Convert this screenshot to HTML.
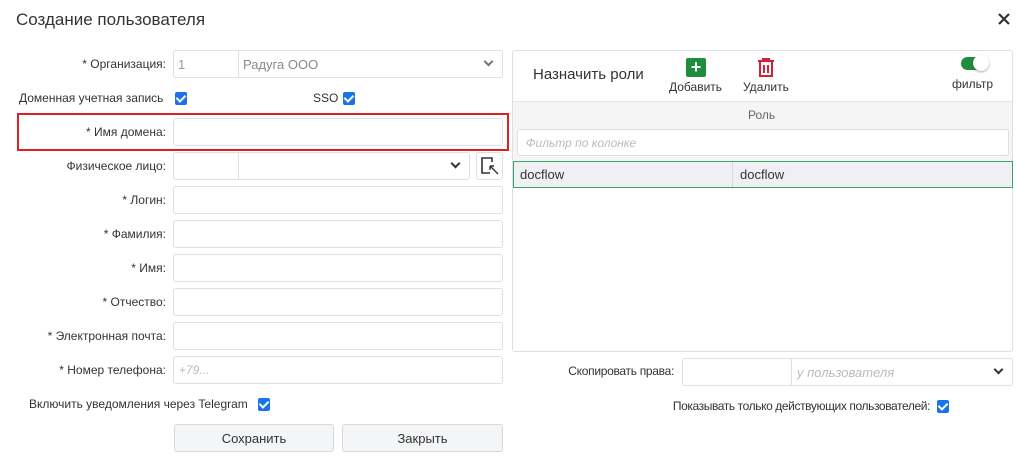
<!DOCTYPE html>
<html><head><meta charset="utf-8"><style>
*{box-sizing:border-box;margin:0;padding:0}
body{width:1017px;height:457px;background:#fff;font-family:"Liberation Sans",sans-serif;font-size:12px;color:#333;position:relative;overflow:hidden}
.a{position:absolute}
.lbl{position:absolute;right:851px;text-align:right;white-space:nowrap;color:#333}
.in{position:absolute;border:1px solid #dcdfe6;border-radius:3px;background:#fff;height:28px}
.cb{position:absolute;width:12px;height:13px;background:#1a73e8;border-radius:2px}
.cb::after{content:"";position:absolute;left:3px;top:1px;width:4px;height:7px;border:solid #fff;border-width:0 2px 2px 0;transform:rotate(45deg)}
.chev{position:absolute;width:7px;height:7px;border:solid #333;border-width:0 2px 2px 0;transform:rotate(45deg)}
.btn{position:absolute;border:1px solid #d5d8de;border-radius:3px;background:#f4f5f7;height:28px;text-align:center;line-height:27px;font-size:13px}
</style></head><body>
<div class="a" style="left:16px;top:10px;font-size:17px;color:#333">Создание пользователя</div>
<svg class="a" style="left:998px;top:13px" width="12" height="12" viewBox="0 0 12 12"><path d="M1 1l10 10M11 1L1 11" stroke="#333" stroke-width="2.2"/></svg>

<div class="lbl" style="top:57px">* Организация:</div>
<div class="in" style="left:173px;top:50px;width:330px"></div>
<div class="a" style="left:238px;top:51px;width:1px;height:26px;background:#dcdfe6"></div>
<div class="a" style="left:178px;top:57px;color:#999;font-size:13px">1</div>
<div class="a" style="left:243px;top:57px;color:#888;font-size:13px">Радуга ООО</div>
<div class="chev" style="left:485px;top:58px;border-color:#777"></div>

<div class="a" style="left:19px;top:91px">Доменная учетная запись</div>
<div class="cb" style="left:175px;top:92px"></div>
<div class="a" style="left:313px;top:91px">SSO</div>
<div class="cb" style="left:343px;top:92px"></div>

<div class="a" style="left:17px;top:113px;width:492px;height:38px;border:2px solid #e02020"></div>
<div class="lbl" style="top:125px">* Имя домена:</div>
<div class="in" style="left:173px;top:118px;width:330px"></div>

<div class="lbl" style="top:159px">Физическое лицо:</div>
<div class="in" style="left:173px;top:152px;width:297px"></div>
<div class="a" style="left:238px;top:153px;width:1px;height:26px;background:#dcdfe6"></div>
<div class="chev" style="left:452px;top:160px"></div>
<div class="in" style="left:476px;top:152px;width:27px;height:28px"></div>
<svg class="a" style="left:479px;top:155px" width="22" height="22" viewBox="0 0 22 22"><path d="M11 3H3v15h8M11 3h2v4" fill="none" stroke="#333" stroke-width="1.6"/><path d="M11 11l8 8M11 11v4M11 11h4" fill="none" stroke="#333" stroke-width="1.4"/></svg>

<div class="lbl" style="top:193px">* Логин:</div><div class="in" style="left:173px;top:186px;width:330px"></div>
<div class="lbl" style="top:227px">* Фамилия:</div><div class="in" style="left:173px;top:220px;width:330px"></div>
<div class="lbl" style="top:261px">* Имя:</div><div class="in" style="left:173px;top:254px;width:330px"></div>
<div class="lbl" style="top:295px">* Отчество:</div><div class="in" style="left:173px;top:288px;width:330px"></div>
<div class="lbl" style="top:329px">* Электронная почта:</div><div class="in" style="left:173px;top:322px;width:330px"></div>
<div class="lbl" style="top:363px">* Номер телефона:</div><div class="in" style="left:173px;top:356px;width:330px"></div>
<div class="a" style="left:179px;top:363px;color:#bbb;font-style:italic">+79...</div>

<div class="a" style="left:29px;top:397px">Включить уведомления через Telegram</div>
<div class="cb" style="left:258px;top:398px"></div>

<div class="btn" style="left:174px;top:424px;width:160px">Сохранить</div>
<div class="btn" style="left:342px;top:424px;width:161px">Закрыть</div>

<div class="a" style="left:512px;top:50px;width:501px;height:302px;border:1px solid #dcdfe6;border-radius:3px"></div>
<div class="a" style="left:533px;top:66px;font-size:15px;color:#333">Назначить роли</div>
<div class="a" style="left:686px;top:58px;width:20px;height:19px;background:#1e8e3e;border-radius:2px;color:#fff;font-size:18px;font-weight:bold;line-height:19px;text-align:center">+</div>
<div class="a" style="left:669px;top:80px">Добавить</div>
<svg class="a" style="left:757px;top:58px" width="18" height="19" viewBox="0 0 18 19"><path d="M1 3h16M6 3V1h6v2M3 3v15h12V3M7 7v8M11 7v8" fill="none" stroke="#d6203a" stroke-width="2"/></svg>
<div class="a" style="left:743px;top:80px">Удалить</div>
<div class="a" style="left:961px;top:57px;width:27px;height:13px;background:#1e8e3e;border-radius:7px"></div>
<div class="a" style="left:973px;top:55px;width:16px;height:16px;background:#fff;border-radius:50%;box-shadow:0 1px 2px rgba(0,0,0,.35)"></div>
<div class="a" style="left:952px;top:77px">фильтр</div>
<div class="a" style="left:513px;top:101px;width:499px;height:60px;background:#f5f5f6;border-top:1px solid #e4e6ea"></div>
<div class="a" style="left:748px;top:108px;color:#666">Роль</div>
<div class="in" style="left:517px;top:129px;width:492px;height:27px"></div>
<div class="a" style="left:526px;top:136px;color:#bbb;font-style:italic">Фильтр по колонке</div>
<div class="a" style="left:513px;top:161px;width:500px;height:27px;background:#eef0f3;border:1px solid #3aa56a"></div>
<div class="a" style="left:732px;top:162px;width:1px;height:25px;background:#d5d8de"></div>
<div class="a" style="left:520px;top:167px;font-size:13px">docflow</div>
<div class="a" style="left:740px;top:167px;font-size:13px">docflow</div>

<div class="a" style="right:343px;top:364px;white-space:nowrap;letter-spacing:-0.3px">Скопировать права:</div>
<div class="in" style="left:682px;top:358px;width:331px"></div>
<div class="a" style="left:791px;top:359px;width:1px;height:26px;background:#dcdfe6"></div>
<div class="a" style="left:797px;top:365px;color:#bbb;font-style:italic;font-size:13px">у пользователя</div>
<div class="chev" style="left:995px;top:366px"></div>
<div class="a" style="right:87px;top:399px;white-space:nowrap;letter-spacing:-0.4px">Показывать только действующих пользователей:</div>
<div class="cb" style="left:937px;top:400px"></div>
</body></html>
